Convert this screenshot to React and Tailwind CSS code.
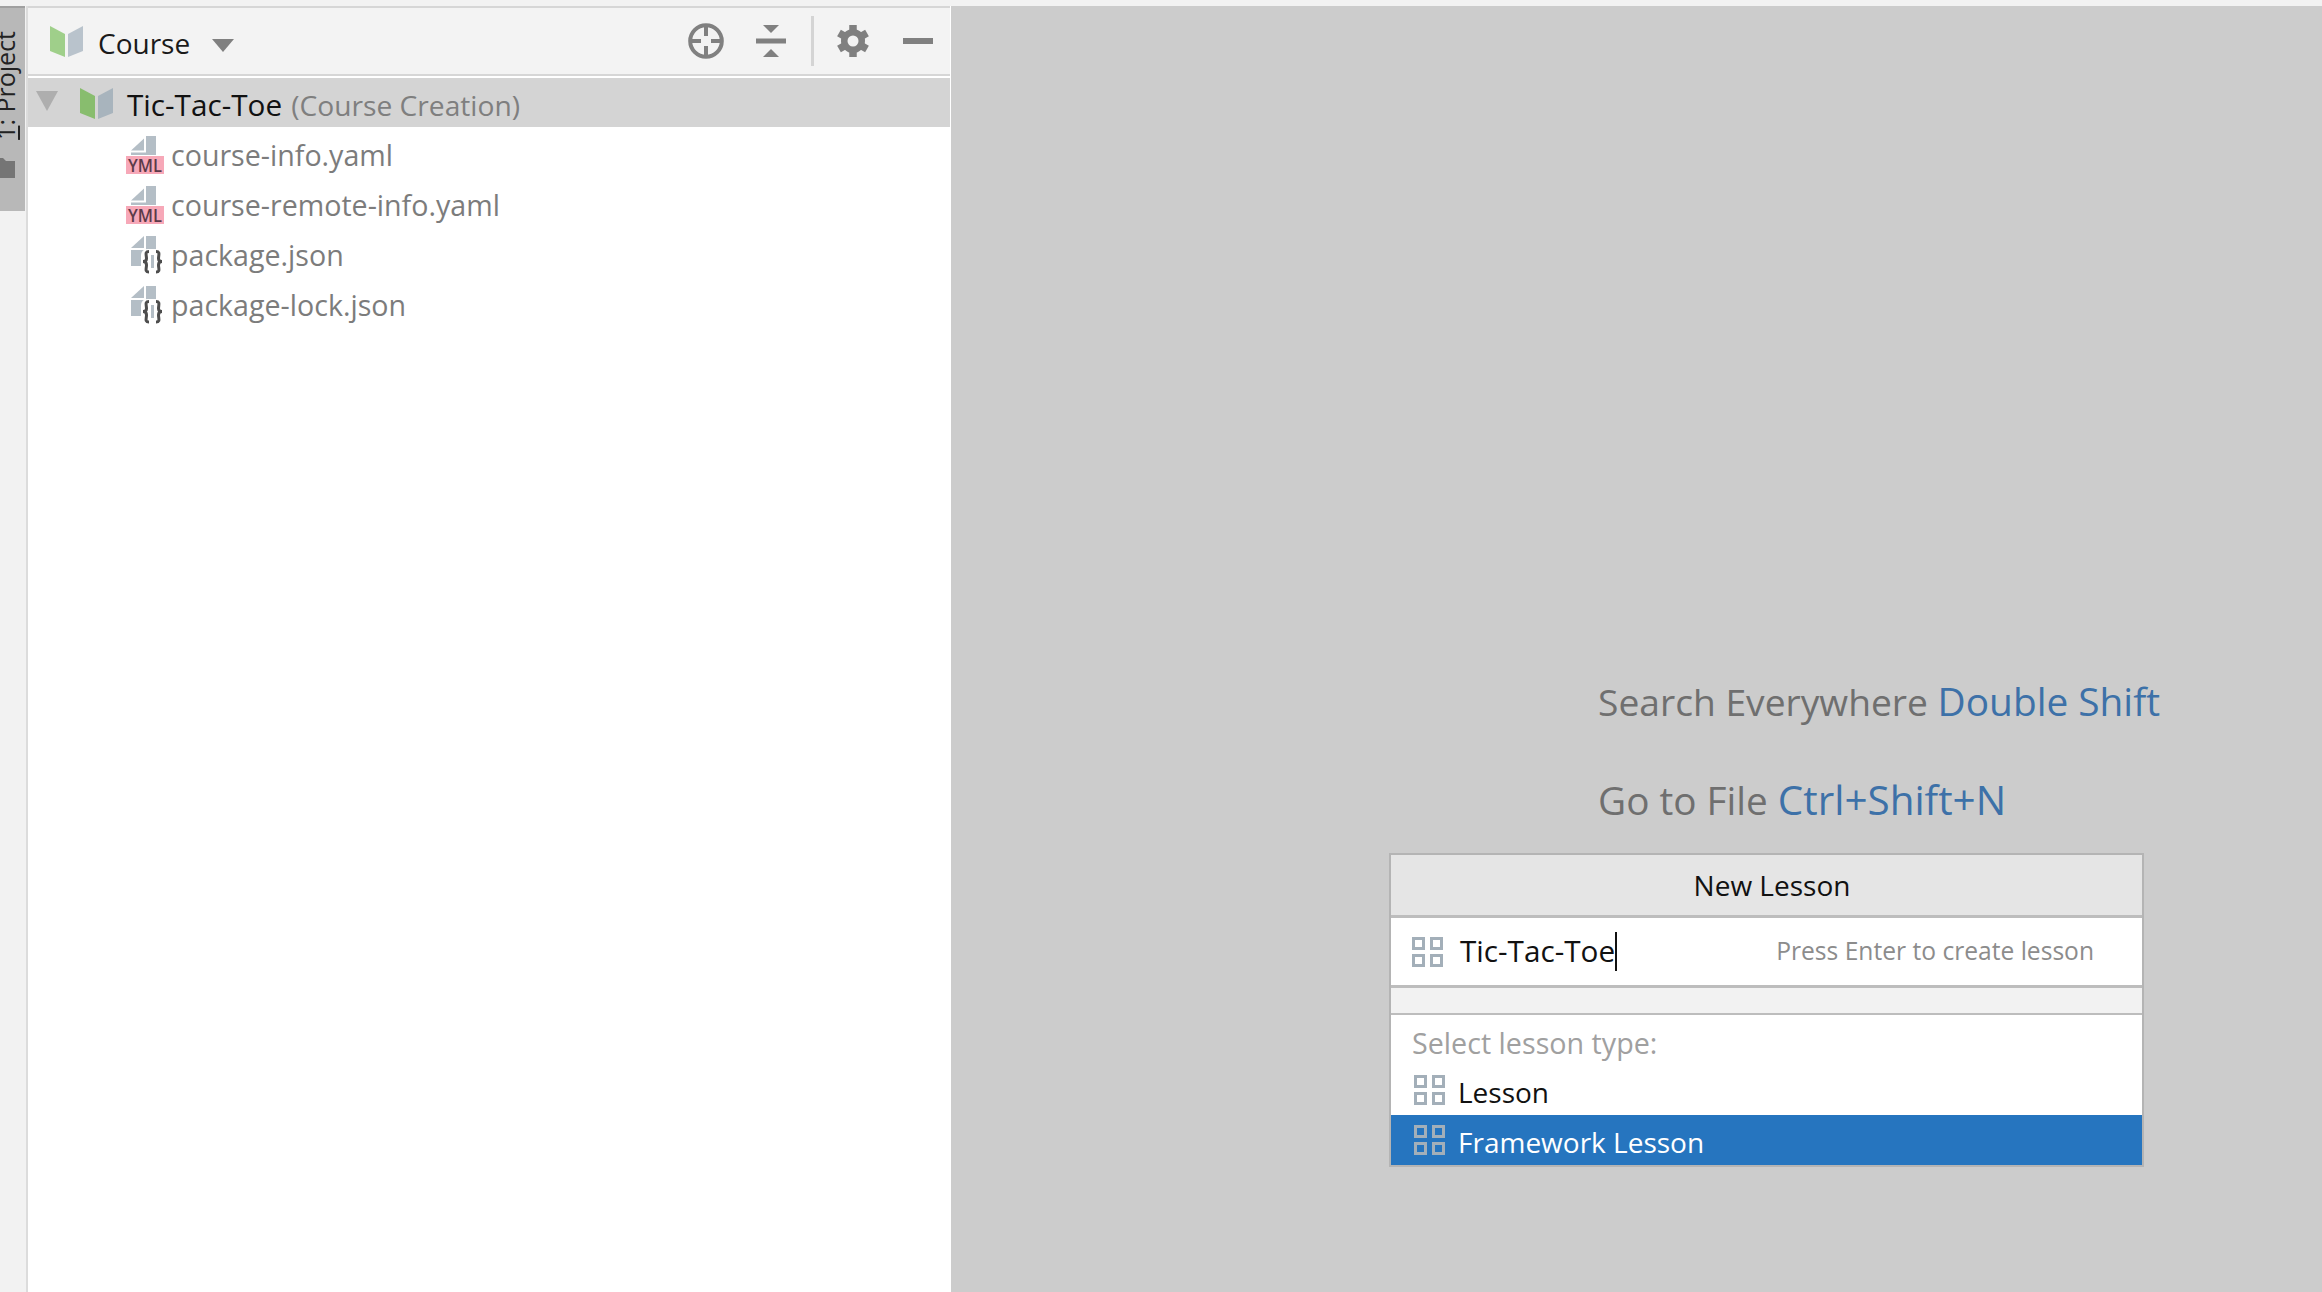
const font = { fontFamily: '"Open Sans", "Noto Sans", sans-serif' }

const BookIcon = ({ green, gray, className }) => (
  <svg viewBox="0 0 33 31" className={className}>
    <path d="M0 0 15 8V31L0 25Z" fill={green} />
    <path d="M18 8 33 0V25L18 31Z" fill={gray} />
  </svg>
)

const YamlIcon = () => (
  <svg width="38" height="40" viewBox="0 0 38 40" className="shrink-0 mt-[6px]">
    <path d="M5 15.5 18 3.5V15.5Z" fill="#b4bec6" />
    <path d="M20 1H30V20H5V17.5H20Z" fill="#b4bec6" />
    <rect x="0" y="21" width="38" height="18" fill="#f7a8b8" />
    <text x="19" y="36.5" textAnchor="middle" fontSize="18" fontWeight="600" fill="#5c3a49" fontFamily="Open Sans" textLength="34" lengthAdjust="spacingAndGlyphs">YML</text>
  </svg>
)

const JsonIcon = () => (
  <svg width="38" height="40" viewBox="0 0 38 40" className="shrink-0 mt-[6px]">
    <path d="M5 13 18 1V13Z" fill="#b4bec6" />
    <path d="M20 1H30V31H5V15H20Z" fill="#b4bec6" />
    <rect x="15" y="14" width="23" height="25" rx="6" fill="#fff" />
    <g fill="none" stroke="#4d4d4d" strokeWidth="3">
      <path d="M23 16.5C18.5 16.5 20.5 20 20.5 23.5 20.5 25.5 19.5 26.5 17 26.5 19.5 26.5 20.5 27.5 20.5 30 20.5 33.5 18.5 37 23 37" />
      <path d="M30 16.5C34.5 16.5 32.5 20 32.5 23.5 32.5 25.5 33.5 26.5 36 26.5 33.5 26.5 32.5 27.5 32.5 30 32.5 33.5 34.5 37 30 37" />
    </g>
    <rect x="25" y="20" width="3" height="13" fill="#b4bec6" />
  </svg>
)

const LessonIcon = ({ className }) => (
  <svg width="31" height="30" viewBox="0 0 31 30" className={className} fill="none" stroke="#a3afb9" strokeWidth="3">
    <rect x="1.5" y="1.5" width="10" height="10" />
    <rect x="19.5" y="1.5" width="10" height="10" />
    <rect x="1.5" y="18.5" width="10" height="10" />
    <rect x="19.5" y="18.5" width="10" height="10" />
  </svg>
)

const Crosshair = () => (
  <svg width="36" height="36" viewBox="0 0 36 36" fill="none" stroke="#808080" strokeWidth="4">
    <circle cx="18" cy="18" r="15.8" />
    <path d="M18 2V13M18 23V34M2 18H13M23 18H34" />
  </svg>
)

const CollapseAll = () => (
  <svg width="30" height="32" viewBox="0 0 30 32" fill="#808080">
    <path d="M7 0H23L15 8Z" />
    <rect x="0" y="13.5" width="30" height="5" />
    <path d="M7 32H23L15 24Z" />
  </svg>
)

const GearIcon = () => (
  <svg width="32" height="34" viewBox="0 0 32 34">
    <g stroke="#808080" strokeWidth="7.5">
      <path d="M16 1V33" />
      <path d="M2 9 30 25" />
      <path d="M2 25 30 9" />
    </g>
    <circle cx="16" cy="17" r="12" fill="#808080" />
    <circle cx="16" cy="17" r="5.5" fill="#f3f3f3" />
  </svg>
)

const files = [
  { name: 'course-info.yaml', icon: <YamlIcon /> },
  { name: 'course-remote-info.yaml', icon: <YamlIcon /> },
  { name: 'package.json', icon: <JsonIcon /> },
  { name: 'package-lock.json', icon: <JsonIcon /> },
]

export default function App() {
  return (
    <div className="w-[2322px] h-[1292px] overflow-hidden flex flex-col bg-[#f2f2f2]" style={font}>
      <div className="h-[6px] shrink-0 bg-[#f2f2f2]" />
      <div className="flex flex-1 min-h-0">
        {/* Tool window bar */}
        <div className="w-[28px] shrink-0 border-r-2 border-[#dcdcdc]">
          <div className="w-[25px] h-[205px] bg-[#b8b8b8] border-t-2 border-[#a0a0a0] overflow-hidden flex flex-col items-start">
            <div className="h-[132px] w-[25px] flex items-end justify-start shrink-0">
              <span className="[writing-mode:vertical-rl] rotate-180 text-[25px] leading-[26px] text-[#222] whitespace-nowrap ml-[-8px]">
                <span className="underline">1</span>: Project
              </span>
            </div>
            <svg width="15" height="20" viewBox="0 0 15 20" className="mt-[18px]">
              <path d="M0 0H3L6 3H15V20H0Z" fill="#757575" />
            </svg>
          </div>
        </div>

        {/* Project panel */}
        <div className="w-[922px] shrink-0 bg-white flex flex-col">
          <div className="h-[70px] shrink-0 bg-[#f3f3f3] border-t-2 border-b-2 border-[#d6d6d6] flex items-center pl-[22px] pr-[17px]">
            <BookIcon green="#9fcf8a" gray="#b9c3cc" className="w-[33px] h-[31px]" />
            <span className="ml-[15px] mt-[4px] text-[28px] text-[#1a1a1a]">Course</span>
            <svg width="22" height="13" viewBox="0 0 22 13" className="ml-[22px] mt-[8px]">
              <path d="M0 0H22L11 13Z" fill="#808080" />
            </svg>
            <div className="ml-auto flex items-center">
              <Crosshair />
              <div className="ml-[32px] flex"><CollapseAll /></div>
              <div className="ml-[25px] w-[3px] h-[50px] bg-[#d4d4d4]" />
              <div className="ml-[23px] flex"><GearIcon /></div>
              <div className="ml-[34px] w-[30px] h-[6px] bg-[#808080]" />
            </div>
          </div>
          <div className="h-[2px] shrink-0 bg-white" />
          <div className="h-[49px] shrink-0 bg-[#d4d4d4] flex items-center pl-[8px]">
            <svg width="22" height="20" viewBox="0 0 22 20" className="mb-[3px]">
              <path d="M0 0H22L11 20Z" fill="#aeaeae" />
            </svg>
            <BookIcon green="#88bd6e" gray="#a8b4bd" className="ml-[22px] w-[33px] h-[31px] mt-[2px]" />
            <span className="ml-[14px] mt-[5px] text-[29.7px] text-[#111] whitespace-nowrap">Tic-Tac-Toe</span>
            <span className="ml-[9px] mt-[5px] text-[28.2px] text-[#7f7f7f] whitespace-nowrap">(Course Creation)</span>
          </div>
          <div className="flex flex-col">
            {files.map((file) => (
              <div key={file.name} className="h-[50px] flex items-center pl-[98px]">
                {file.icon}
                <span className="ml-[7px] mt-[6px] text-[28.6px] text-[#7c7c7c] whitespace-nowrap">{file.name}</span>
              </div>
            ))}
          </div>
        </div>
        <div className="w-[1px] shrink-0 bg-white" />

        {/* Editor area */}
        <div className="flex-1 bg-[#cccccc] flex flex-col items-start pl-[438px] pt-[671px]">
          <div className="ml-[209px] text-[37.2px] leading-[48px] whitespace-nowrap text-[#6f6f6f]">
            Search Everywhere <span className="text-[38.8px] text-[#3d71a8]">Double Shift</span>
          </div>
          <div className="ml-[209px] mt-[50px] text-[38.7px] leading-[48px] whitespace-nowrap text-[#6f6f6f]">
            Go to File <span className="text-[40.4px] text-[#3d71a8]">Ctrl+Shift+N</span>
          </div>

          {/* New Lesson popup */}
          <div className="mt-[29px] w-[755px] border-2 border-[#b4b4b4] bg-white flex flex-col">
            <div className="h-[60px] shrink-0 bg-[#e5e5e5] flex items-center justify-center pl-[11px] text-[28px] text-[#111]">
              New Lesson
            </div>
            <div className="h-[73px] shrink-0 border-t-[3px] border-b-[3px] border-[#bdbdbd] flex items-center pl-[21px] pr-[48px]">
              <LessonIcon />
              <span className="ml-[17px] text-[29.7px] text-[#111] whitespace-nowrap">Tic-Tac-Toe</span>
              <div className="w-[2px] h-[39px] bg-[#111]" />
              <span className="ml-auto text-[24.6px] text-[#8c8c8c] whitespace-nowrap">Press Enter to create lesson</span>
            </div>
            <div className="h-[27px] shrink-0 bg-[#f2f2f2] border-b-2 border-[#bdbdbd]" />
            <div className="h-[50px] shrink-0 flex items-center pl-[21px] pt-[5px] text-[28.7px] text-[#a0a0a0]">Select lesson type:</div>
            <div className="h-[50px] shrink-0 flex items-center pl-[23px] text-[28px] text-[#111]">
              <LessonIcon />
              <span className="ml-[13px] mt-[3px]">Lesson</span>
            </div>
            <div className="h-[50px] shrink-0 flex items-center pl-[23px] text-[28px] text-white bg-[#2675bf]">
              <LessonIcon />
              <span className="ml-[13px] mt-[3px]">Framework Lesson</span>
            </div>
          </div>
        </div>
      </div>
    </div>
  )
}
